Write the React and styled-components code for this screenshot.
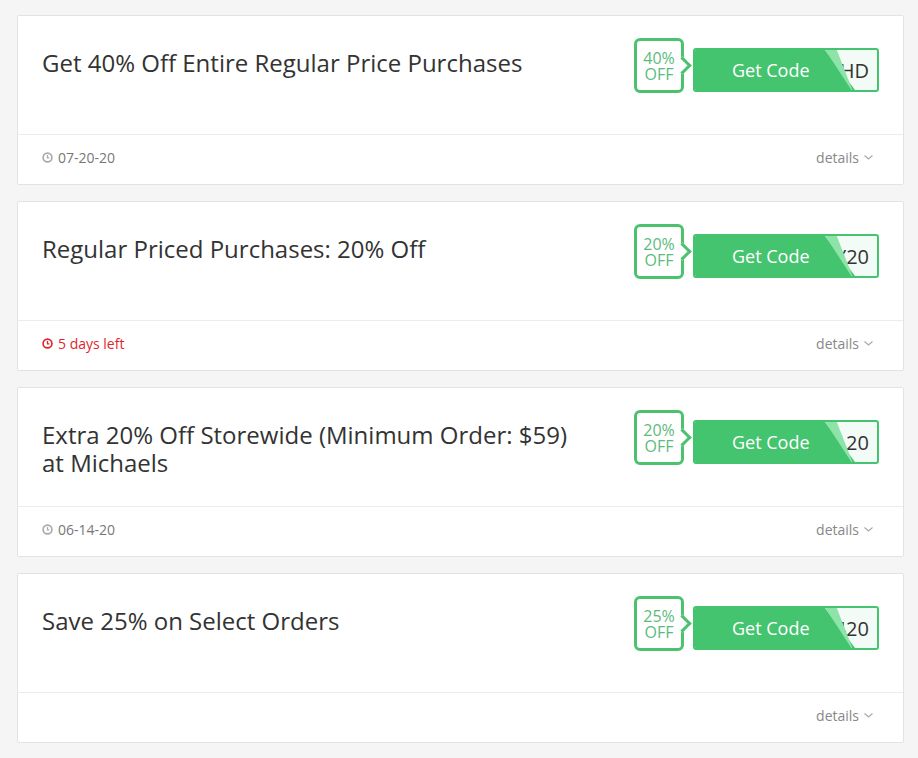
import React from 'react'
import styled, { createGlobalStyle } from 'styled-components'

const GlobalStyle = createGlobalStyle`
    body {
        margin: 0;
        background: #f5f5f5;
        font-family: "Open Sans", "Liberation Sans", sans-serif;
    }
`

const List = styled.div`
    display: flex;
    flex-direction: column;
    gap: 16px;
    padding: 15px 14px 15px 17px;
`

const Card = styled.div`
    background: #fff;
    border: 1px solid #e3e3e3;
    border-radius: 2px;
`

const Top = styled.div`
    display: flex;
    justify-content: space-between;
    align-items: flex-start;
    height: 119px;
    padding: 22px 24px 0 24px;
    border-bottom: 1px solid #ececec;
    box-sizing: border-box;
`

const Title = styled.h2`
    margin: 11px 0 0;
    max-width: 545px;
    font-size: 24px;
    line-height: 28px;
    font-weight: 400;
    color: #333;
`

const Offer = styled.div`
    display: flex;
    align-items: flex-start;
    gap: 9px;
`

const Badge = styled.div`
    position: relative;
    width: 50px;
    height: 55px;
    box-sizing: border-box;
    border: 3px solid #4cc26f;
    border-radius: 6px;
    display: flex;
    flex-direction: column;
    align-items: center;
    justify-content: center;
    color: #5cbb7c;
    font-size: 16px;
    line-height: 16px;

    &::after {
        content: '';
        position: absolute;
        right: -8px;
        top: 18px;
        width: 10px;
        height: 10px;
        background: #fff;
        border-top: 3px solid #4cc26f;
        border-right: 3px solid #4cc26f;
        transform: rotate(45deg);
    }
`

const CodeButton = styled.div`
    position: relative;
    margin-top: 10px;
    width: 186px;
    height: 44px;
    box-sizing: border-box;
    border: 2px solid #45c46f;
    border-radius: 3px;
    background: #f3fbf6;
    overflow: hidden;
    display: flex;
    align-items: center;
    justify-content: flex-end;
    padding-right: 8px;
    font-size: 20px;
    color: #333;
    white-space: nowrap;
`

const GreenFace = styled.div`
    position: absolute;
    left: 0;
    top: 0;
    bottom: 0;
    width: 160px;
    background: #45c46f;
    clip-path: polygon(0 0, 130px 0, 160px 100%, 0 100%);
    display: flex;
    align-items: center;
    padding-left: 37px;
    box-sizing: border-box;
    color: #fff;
    font-size: 18px;
`

const Fold = styled.div`
    position: absolute;
    left: 129px;
    top: -2px;
    width: 30px;
    height: 46px;
    background: #8de3a8;
    clip-path: polygon(0 0, 12px 0, 30px 100%);
`

const Footer = styled.div`
    height: 49px;
    box-sizing: border-box;
    display: flex;
    align-items: center;
    justify-content: space-between;
    padding: 0 29px 5px 24px;
    font-size: 14px;
`

const Expiry = styled.div`
    display: flex;
    align-items: center;
    gap: 5px;
    color: ${p => (p.urgent ? '#e0262b' : '#777')};
`

const Details = styled.div`
    display: flex;
    align-items: center;
    gap: 4px;
    color: #888;
`

const Clock = ({ color }) => (
    <svg width="11" height="11" viewBox="0 0 12 12">
        <circle cx="6" cy="6" r="4.8" fill="none" stroke={color} strokeWidth="1.8" />
        <path d="M6 3.4V6.3H8" fill="none" stroke={color} strokeWidth="1.4" />
    </svg>
)

const Chevron = () => (
    <svg width="11" height="8" viewBox="0 0 11 8">
        <path d="M1.5 2.5L5.5 6L9.5 2.5" fill="none" stroke="#aaa" strokeWidth="1.2" />
    </svg>
)

const coupons = [
    { title: 'Get 40% Off Entire Regular Price Purchases', pct: '40%', code: 'SAVEHD', date: '07-20-20' },
    { title: 'Regular Priced Purchases: 20% Off', pct: '20%', code: 'SAVEY20', date: '5 days left', urgent: true },
    { title: 'Extra 20% Off Storewide (Minimum Order: $59) at Michaels', pct: '20%', code: 'SAVE4120', date: '06-14-20' },
    { title: 'Save 25% on Select Orders', pct: '25%', code: 'SAVE420', date: null },
]

export default function App() {
    return (
        <>
            <GlobalStyle />
            <List>
                {coupons.map(c => (
                    <Card key={c.title}>
                        <Top>
                            <Title>{c.title}</Title>
                            <Offer>
                                <Badge>
                                    <span>{c.pct}</span>
                                    <span>OFF</span>
                                </Badge>
                                <CodeButton>
                                    {c.code}
                                    <GreenFace>Get Code</GreenFace>
                                    <Fold />
                                </CodeButton>
                            </Offer>
                        </Top>
                        <Footer>
                            {c.date ? (
                                <Expiry urgent={c.urgent}>
                                    <Clock color={c.urgent ? '#e0262b' : '#aaa'} />
                                    {c.date}
                                </Expiry>
                            ) : <span />}
                            <Details>details <Chevron /></Details>
                        </Footer>
                    </Card>
                ))}
            </List>
        </>
    )
}
